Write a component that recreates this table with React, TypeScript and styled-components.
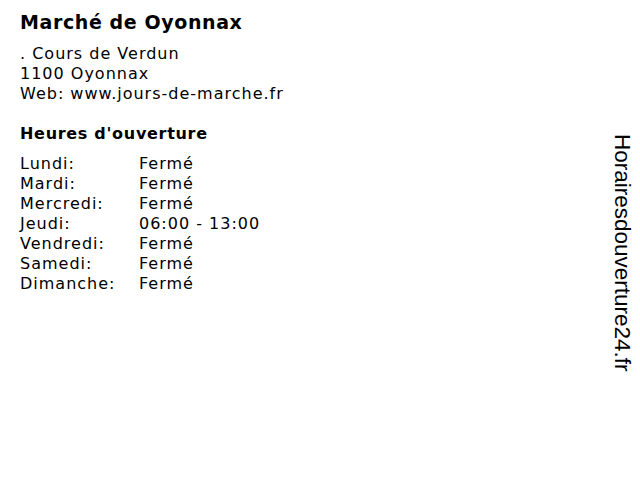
import React from 'react';
import styled, {createGlobalStyle} from 'styled-components';

const GlobalStyle = createGlobalStyle`
  html, body {
    margin: 0;
    padding: 0;
    background: #fff;
  }
`;

const Page = styled.div`
  width: 640px;
  height: 480px;
  display: flex;
  flex-direction: row;
  color: #000;
  font-family: 'DejaVu Sans', Verdana, sans-serif;
`;

const Content = styled.div`
  flex: 1;
  padding: 10px 0 0 20px;
`;

const Title = styled.h1`
  margin: 0;
  font-size: 19px;
  font-weight: 700;
  line-height: 24px;
  letter-spacing: 0.6px;
`;

const Address = styled.div`
  margin-top: 10px;
  font-size: 16px;
  line-height: 20px;
  letter-spacing: 1px;
`;

const Heading = styled.h2`
  margin: 19px 0 0 0;
  font-size: 16px;
  font-weight: 700;
  line-height: 22px;
  letter-spacing: 0.7px;
`;

const Hours = styled.div`
  margin-top: 9px;
  display: grid;
  grid-template-columns: 119px auto;
  font-size: 16px;
  line-height: 20px;
  letter-spacing: 1px;
`;

const Side = styled.div`
  width: 36px;
  padding-top: 134px;
  display: flex;
  justify-content: center;
  box-sizing: border-box;
`;

const Vertical = styled.div`
  writing-mode: vertical-rl;
  font-family: 'Liberation Sans', Arial, sans-serif;
  font-size: 22.5px;
  line-height: 26px;
  color: #000;
`;

const days: [string, string][] = [
  ['Lundi:', 'Fermé'],
  ['Mardi:', 'Fermé'],
  ['Mercredi:', 'Fermé'],
  ['Jeudi:', '06:00 - 13:00'],
  ['Vendredi:', 'Fermé'],
  ['Samedi:', 'Fermé'],
  ['Dimanche:', 'Fermé'],
];

export default function App() {
  return (
    <>
      <GlobalStyle />
      <Page>
        <Content>
          <Title>Marché de Oyonnax</Title>
          <Address>
            . Cours de Verdun
            <br />
            1100 Oyonnax
            <br />
            Web: www.jours-de-marche.fr
          </Address>
          <Heading>Heures d'ouverture</Heading>
          <Hours>
            {days.map(([d, h]) => (
              <React.Fragment key={d}>
                <span>{d}</span>
                <span>{h}</span>
              </React.Fragment>
            ))}
          </Hours>
        </Content>
        <Side>
          <Vertical>Horairesdouverture24.fr</Vertical>
        </Side>
      </Page>
    </>
  );
}
